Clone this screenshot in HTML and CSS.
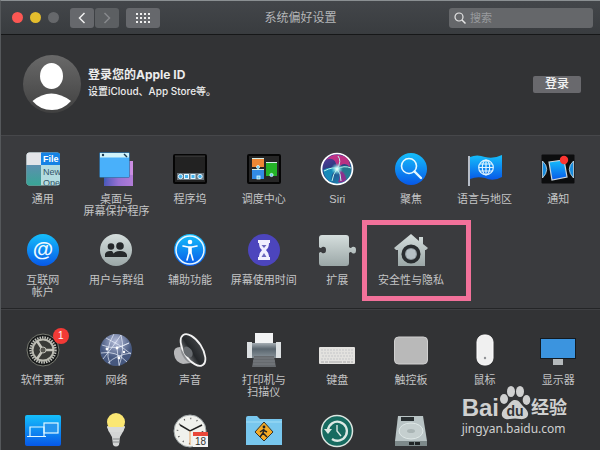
FILE: index.html
```html
<!DOCTYPE html>
<html lang="zh-CN">
<head>
  <meta charset="UTF-8">
  <meta name="viewport" content="width=device-width, initial-scale=1.0">
  <title>系统偏好设置</title>
  <link rel="stylesheet" href="styles.css">
</head>
<body>
  <div class="window">
    <header class="toolbar">
      <div class="tools">
        <div class="lights">
          <button class="light red" aria-label="关闭"></button>
          <button class="light yellow" aria-label="最小化"></button>
          <button class="light gray" aria-label="缩放" disabled></button>
        </div>
        <div class="nav">
          <button class="tool" aria-label="后退">
            <svg width="10" height="12" viewBox="0 0 10 12"><path d="M7.500 1L2.500 6L7.500 11" fill="none" stroke="#f0f0f0" stroke-width="1.500"/></svg>
          </button>
          <button class="tool" aria-label="前进" disabled>
            <svg width="10" height="12" viewBox="0 0 10 12"><path d="M2.500 1L7.500 6L2.500 11" fill="none" stroke="#87898c" stroke-width="1.500"/></svg>
          </button>
        </div>
        <button class="tool wide" aria-label="显示全部">
          <svg width="14" height="10" viewBox="0 0 14 10"><path d="M0 1H14M0 5H14M0 9H14" stroke="#eee" stroke-width="2" stroke-dasharray="2 2"/></svg>
        </button>
      </div>
      <h1>系统偏好设置</h1>
      <label class="search">
        <svg width="12" height="12" viewBox="0 0 12 12"><circle cx="5" cy="5" r="4" fill="none" stroke="#e6e6e6" stroke-width="1.200"/><path d="M8 8L11.500 11.500" stroke="#e6e6e6" stroke-width="1.500"/></svg>
        <input type="search" placeholder="搜索" aria-label="搜索">
      </label>
    </header>

    <section class="account">
      <svg class="avatar" width="58" height="58" viewBox="0 0 58 58">
        <defs>
          <linearGradient id="avatar-bg" x2="0" y2="1"><stop stop-color="#696969"/><stop offset="1" stop-color="#404040"/></linearGradient>
        </defs>
        <circle cx="29" cy="29" r="29" fill="url(#avatar-bg)"/>
        <ellipse cx="28.500" cy="21" rx="11.500" ry="13" fill="#fff"/>
        <path d="M9.500 46Q28 31 48 46Q40 55 29 55Q17 55 9.500 46Z" fill="#fff"/>
      </svg>
      <div class="account-text">
        <h2>登录您的Apple ID</h2>
        <p>设置iCloud、App Store等。</p>
      </div>
      <button class="sign-in">登录</button>
    </section>

    <main>
      <section class="panel light-panel">
        <a class="item" href="#">
          <svg class="icon" viewBox="-20 -18 40 36">
            <defs>
              <linearGradient id="teal" x2="0" y2="1"><stop stop-color="#5d8fae"/><stop offset="1" stop-color="#37a695"/></linearGradient>
              <clipPath id="general-clip"><rect x="-16.500" y="-16.500" width="33.500" height="33" rx="3"/></clipPath>
            </defs>
            <g clip-path="url(#general-clip)">
              <rect x="-17" y="-17" width="35" height="35" fill="#b3dce0"/>
              <rect x="-17" y="-17" width="16" height="13" fill="#e3e4e8"/>
              <rect x="-17" y="-4" width="15" height="21" fill="url(#teal)"/>
              <rect x="-2" y="-17" width="20" height="13" fill="#1583e5"/>
              <text class="icon-bold" x="0" y="-7" font-size="9" fill="#fff">File</text>
              <text class="icon-text" x="0" y="6" font-size="9" fill="#35566a">New</text>
              <text class="icon-text" x="0" y="17" font-size="9" fill="#35566a">Open</text>
            </g>
          </svg>
          <span>通用</span>
        </a>
        <a class="item" href="#">
          <svg class="icon" viewBox="-20 -18 40 36">
            <defs><linearGradient id="purple"><stop stop-color="#3d5bb8"/><stop offset=".5" stop-color="#a87fdc"/><stop offset="1" stop-color="#ce8ee2"/></linearGradient></defs>
            <rect x="-12" y="-8" width="29" height="25" fill="url(#purple)"/>
            <path d="M-12 14Q0 4 17 6V17H-12Z" fill="#7052bd" opacity=".3"/>
            <rect x="-16.500" y="-16.500" width="30" height="25" rx="1" fill="#49b0fa" stroke="#255882" stroke-width=".5"/>
            <path d="M-16 -16H13V-11.500H-16Z" fill="#cff2fa"/>
            <circle cx="-13" cy="-14" r="1.200" fill="#183950"/><path d="M8 -15L11 -12" stroke="#183950" stroke-width="1.400"/>
          </svg>
          <span>桌面与<br>屏幕保护程序</span>
        </a>
        <a class="item" href="#">
          <svg class="icon" viewBox="-20 -18 40 36">
            <rect x="-16" y="-14" width="32" height="28" rx="1" fill="#222" stroke="#050505" stroke-width="2"/>
            <path d="M-15 -13H15" stroke="#555" stroke-width=".7"/>
            <rect x="-13" y="4" width="27" height="7" fill="#68747c"/>
            <g fill="#43b3ef" stroke="#e4f6ff"><circle cx="-9.500" cy="7.500" r="2.200"/><rect x="-5.500" y="5.500" width="4" height="4"/><rect x="1" y="5.500" width="4" height="4"/><circle cx="10" cy="7.500" r="2.200"/></g>
          </svg>
          <span>程序坞</span>
        </a>
        <a class="item" href="#">
          <svg class="icon" viewBox="-20 -18 40 36">
            <rect x="-16" y="-14" width="32" height="28" rx="1" fill="#262626" stroke="#050505" stroke-width="2"/>
            <path d="M-12 -11H0V-2H-12Z" fill="#ed8735"/><path d="M-12 0H0V10H-12Z" fill="#328be3"/><path d="M2 -7H13V7H2Z" fill="#24b328"/>
            <path d="M-12 -10.500H0M-12 .5H0M2 -6.500H13" stroke="#d5eee8"/>
            <g fill="#64c9f1" stroke="#e2f8ff" stroke-width=".8"><circle cx="-6" cy="-2" r="1.500"/><rect x="-7" y="7" width="3" height="3"/><circle cx="7.500" cy="6" r="1.600"/></g>
          </svg>
          <span>调度中心</span>
        </a>
        <a class="item" href="#">
          <svg class="icon" viewBox="-20 -18 40 36">
            <defs>
              <linearGradient id="siri-base" x2=".5" y2="1"><stop stop-color="#6b3aa8"/><stop offset=".5" stop-color="#2a3b7e"/><stop offset="1" stop-color="#1b81ae"/></linearGradient>
              <radialGradient id="glow"><stop stop-color="#fff"/><stop offset=".3" stop-color="#bff8f5" stop-opacity=".9"/><stop offset="1" stop-color="#58dce4" stop-opacity="0"/></radialGradient>
            </defs>
            <circle r="15.500" fill="url(#siri-base)" stroke="#fff" stroke-width="1.700"/>
            <path d="M0 0Q-1 -14 -11 -9Q-5 -15 2 -14Q13 -13 13 -2Q7 -9 0 0" fill="#dd2f83" opacity=".8"/>
            <path d="M0 0Q-8 -3 -14 1Q-12 11 -5 13Q-8 6 0 0Z" fill="#1689b8"/>
            <path d="M0 0Q10 1 10 10Q5 15 1 13Q5 6 0 0Z" fill="#8c318d"/>
            <path d="M0 0Q8 -6 14 -1Q14 7 9 11Q9 3 0 0Z" fill="#26808d" opacity=".8"/>
            <path d="M-13 2Q-3 -3 0 0Q-4 5 -5 12M0 0Q5 -8 1 -13M0 0Q7 -4 14 -1M0 0Q4 4 4 12" stroke="#baf4eb" stroke-width="1" fill="none"/>
            <circle r="6" fill="url(#glow)"/>
          </svg>
          <span>Siri</span>
        </a>
        <a class="item" href="#">
          <svg class="icon" viewBox="-20 -18 40 36">
            <defs><linearGradient id="blue" x2="0" y2="1"><stop stop-color="#15bffb"/><stop offset="1" stop-color="#0758e8"/></linearGradient></defs>
            <circle r="16" fill="url(#blue)"/><circle cx="-2" cy="-3" r="7.500" fill="none" stroke="#e6f8ff" stroke-width="1.600"/><path d="M3.500 2.500L10 9" stroke="#e6f8ff" stroke-width="2.400" stroke-linecap="round"/>
          </svg>
          <span>聚焦</span>
        </a>
        <a class="item" href="#">
          <svg class="icon" viewBox="-20 -18 40 36">
            <path d="M-15 -12Q-8 -15 0 -12Q9 -10 17 -14V8Q8 13 0 9Q-8 7 -15 10Z" fill="url(#blue)"/>
            <path d="M-16 -13V17" stroke="#b7bdc7" stroke-width="2"/>
            <g fill="none" stroke="#dff3ff" stroke-width="1.200"><circle cx="1" cy="-1.500" r="7.300"/><ellipse cx="1" cy="-1.500" rx="3.700" ry="7.300"/><path d="M1 -9V6M-6 -1.500H8M-5 -5H7M-5 2H7"/></g>
          </svg>
          <span>语言与地区</span>
        </a>
        <a class="item" href="#">
          <svg class="icon" viewBox="-20 -18 40 36">
            <rect x="-16.500" y="-14.500" width="33" height="29" rx="1" fill="#0c0d0e"/>
            <path d="M-15.500 -8Q-7 0 -15.500 9ZM15.500 -8Q7 0 15.500 9Z" fill="#168bde" stroke="#c7d9e2" stroke-width=".8"/>
            <path d="M-9 -7L6 -9L9 8L-6 11Z" fill="url(#blue)" stroke="#ccd6dd" stroke-width="1.200"/>
            <circle cx="6" cy="-9" r="4.200" fill="#fb3531"/>
          </svg>
          <span>通知</span>
        </a>

        <a class="item" href="#">
          <svg class="icon" viewBox="-20 -18 40 36"><circle r="16" fill="url(#blue)"/><text class="icon-bold" y="6" font-size="21" text-anchor="middle" fill="#eef9ff">@</text></svg>
          <span>互联网<br>帐户</span>
        </a>
        <a class="item" href="#">
          <svg class="icon" viewBox="-20 -18 40 36">
            <defs><linearGradient id="silver" x2="0" y2="1"><stop stop-color="#d5dedd"/><stop offset="1" stop-color="#9ba7a7"/></linearGradient></defs>
            <circle r="16" fill="url(#silver)"/>
            <g fill="#25282a"><circle cx="-5" cy="-3.500" r="3.300"/><path d="M-11 7V4Q-10 1 -6 1H-4L0 7Z"/><circle cx="4" cy="-4" r="3.800"/><path d="M-3 7V5Q-2 1 4 1Q10 1 11 5V7Z"/></g>
          </svg>
          <span>用户与群组</span>
        </a>
        <a class="item" href="#">
          <svg class="icon" viewBox="-20 -18 40 36">
            <circle r="16" fill="url(#blue)"/><circle r="14" fill="none" stroke="#e5f7ff" stroke-width="1.500"/>
            <circle cy="-8" r="2.300" fill="#fff"/><path d="M-7 -4L-2 -3H2L7 -4M0 -3V3M-1 -3V3L-3 10M1 -3V3L3 10" fill="none" stroke="#fff" stroke-width="1.600" stroke-linecap="round"/>
          </svg>
          <span>辅助功能</span>
        </a>
        <a class="item" href="#">
          <svg class="icon" viewBox="-20 -18 40 36">
            <circle r="16" fill="#4c45bd"/><path d="M-6 -10H6V-7H5Q5 -2 2 0Q5 3 5 7H6V10H-6V7H-5Q-5 3 -2 0Q-5 -2 -5 -7H-6Z" fill="#f0efff"/><path d="M-2.500 -5H2.500L0 -2ZM0 3L2.500 7H-2.500Z" fill="#6a66bd"/>
          </svg>
          <span>屏幕使用时间</span>
        </a>
        <a class="item" href="#">
          <svg class="icon" viewBox="-20 -18 40 36"><path d="M-15 -15H9Q12 -15 12 -12V-3Q14 -1 15 -3Q19 -4 19 0Q19 5 15 3Q14 1 12 3V13Q12 16 9 16H-15Q-18 16 -18 13V3Q-16 1 -15 3Q-11 4 -11 0Q-11 -4 -15 -3Q-16 -1 -18 -3V-12Q-18 -15 -15 -15Z" fill="url(#silver)"/></svg>
          <span>扩展</span>
        </a>
        <a class="item current" href="#">
          <svg class="icon" viewBox="-20 -18 40 36">
            <path d="M-17 -2L0 -16L8 -9V-13H12V-6L17 -2L15 0H14V16H-13V0H-15Z" fill="url(#silver)"/>
            <circle cy="4" r="7.800" fill="#8d979c" stroke="#292d30" stroke-width="3.500"/><path d="M0 -1L4 0L5 4L4 8L0 9L-4 8L-5 4L-4 0Z" fill="#b6c0c5"/>
          </svg>
          <span>安全性与隐私</span>
        </a>
      </section>

      <section class="panel dark-panel">
        <a class="item" href="#">
          <span class="icon-box">
            <svg class="icon" viewBox="-20 -18 40 36">
              <circle r="16" fill="#161819" stroke="#777970"/><circle r="12.500" fill="none" stroke="#bfc0b9" stroke-width="2.500" stroke-dasharray="1.500 1"/>
              <circle r="10.500" fill="#393a37" stroke="#babab1" stroke-width="2"/><path d="M0 0L-6 -9M0 0H11M0 0L-6 9" stroke="#c5c5bc" stroke-width="2.500"/><circle r="3" fill="#565650" stroke="#bcbcb4"/>
            </svg>
            <b class="badge">1</b>
          </span>
          <span>软件更新</span>
        </a>
        <a class="item" href="#">
          <svg class="icon" viewBox="-20 -18 40 36">
            <defs><radialGradient id="globe" cy=".25"><stop stop-color="#b5bdda"/><stop offset="1" stop-color="#46587f"/></radialGradient></defs>
            <circle r="16" fill="url(#globe)"/>
            <path d="M-14 -5Q0 1 13 -7M-10 -12Q5 -5 15 4M-2 -16Q-12 0 -6 14M5 -15Q9 0 3 16M-15 3Q0 0 11 12M-13 9Q-4 -2 5 -15M-8 13Q0 5 15 3M1 -2L3 15M1 -2L13 -7" fill="none" stroke="#eff4ff" stroke-width=".8" opacity=".85"/>
            <g fill="#fff"><circle cx="-9" cy="-1" r="1.400"/><circle cx="1" cy="-2" r="1.400"/><circle cx="8" cy="2" r="1.200"/><circle cx="3" cy="8" r="1.400"/></g>
          </svg>
          <span>网络</span>
        </a>
        <a class="item" href="#">
          <svg class="icon" viewBox="-20 -18 40 36">
            <defs><linearGradient id="cone"><stop stop-color="#6c6f72"/><stop offset=".4" stop-color="#24272a"/><stop offset="1" stop-color="#3e4144"/></linearGradient></defs>
            <path d="M-8 -3Q-17 -4 -16 4Q-15 12 -7 14L1 13Z" fill="#b6b7b9"/>
            <path d="M-9 -10Q-12 4 -2 12L12 17Z" fill="#8c8e91"/>
            <ellipse cx="3" cy="0" rx="9" ry="18" fill="url(#cone)" stroke="#f1f1f1" stroke-width="1.800" transform="rotate(-33 3 0)"/>
            <ellipse cx="-2" cy="2" rx="4" ry="6" fill="#686c70" transform="rotate(-33 -2 2)"/>
          </svg>
          <span>声音</span>
        </a>
        <a class="item" href="#">
          <svg class="icon" viewBox="-20 -18 40 36">
            <defs><linearGradient id="printer" x2="0" y2="1"><stop stop-color="#a6aeb4"/><stop offset=".4" stop-color="#59656e"/><stop offset="1" stop-color="#89939a"/></linearGradient></defs>
            <path d="M-9 -17H9V-6H-9Z" fill="#f2f3f4"/><path d="M-14 -7H14V8H-14Z" fill="url(#printer)"/>
            <path d="M-17 -8H-12V8H-17ZM12 -8H17V8H12Z" fill="#dce0e2"/><path d="M-10 6H10L12 17H-12Z" fill="#666a6e"/><path d="M-10 8H10M-11 11H11M-11 14H11" stroke="#797d81"/>
          </svg>
          <span>打印机与<br>扫描仪</span>
        </a>
        <a class="item" href="#">
          <svg class="icon" viewBox="-20 -18 40 36"><rect x="-18" y="-3" width="36" height="17" rx="1" fill="#e3e2df"/><path d="M-16 0H16M-16 3H16M-15 6H16M-16 9H16" stroke="#aaa" stroke-width="1.500" stroke-dasharray="2 1"/><path d="M-16 0H16M-16 3H16M-15 6H16M-16 9H16" stroke="#fff" stroke-width=".8" stroke-dasharray="2 1"/><path d="M-16 12H16" stroke="#aaa" stroke-dasharray="3 1 3 1 13 1 3 1"/></svg>
          <span>键盘</span>
        </a>
        <a class="item" href="#">
          <svg class="icon" viewBox="-20 -18 40 36"><rect x="-16.500" y="-13" width="33" height="27" rx="4" fill="#b9b9b9" stroke="#d0d0d0"/></svg>
          <span>触控板</span>
        </a>
        <a class="item" href="#">
          <svg class="icon" viewBox="-20 -18 40 36"><rect x="-8" y="-15" width="16" height="30" rx="7" fill="#f0f0f0" stroke="#fff"/><circle cy="8" r="1.200" fill="#909296"/></svg>
          <span>鼠标</span>
        </a>
        <a class="item" href="#">
          <svg class="icon" viewBox="-20 -18 40 36"><path d="M-5 9H5V15H-5Z" fill="#b5b9bb"/><rect x="-17.500" y="-11.500" width="35" height="20" fill="#3b94df" stroke="#131a20"/></svg>
          <span>显示器</span>
        </a>

        <a class="item" href="#" aria-label="随航">
          <svg class="icon" viewBox="-20 -18 40 36">
            <rect x="-18" y="-16" width="36" height="31" rx="2" fill="url(#blue)"/>
            <rect x="1" y="-8" width="14" height="10" fill="#2695ed" stroke="#dff8ff" stroke-width="1.200"/><path d="M-13 5V-4H1V5M-16 5.500H3" fill="none" stroke="#dff8ff" stroke-width="1.200"/>
          </svg>
        </a>
        <a class="item" href="#" aria-label="节能">
          <svg class="icon" viewBox="-20 -18 40 36"><path d="M-9 -5Q-7 2 -4 6L-3 14Q0 17 3 14L4 6Q7 2 9 -5Z" fill="#d3d5d5"/><circle cy="-9" r="9" fill="#fbe773"/><path d="M-9 -4H9L7 1H-7Z" fill="#d8dad9"/><path d="M-3 8H4M-3 11H4" stroke="#85898a"/></svg>
        </a>
        <a class="item" href="#" aria-label="日期与时间">
          <svg class="icon" viewBox="-20 -18 40 36">
            <circle r="16" fill="#f0f1ed" stroke="#a2a9aa"/><circle r="12.500" fill="none" stroke="#555" stroke-width="1.600" stroke-dasharray="1 5.540"/>
            <path d="M-10 -6L0 0L12 -6" fill="none" stroke="#222" stroke-width="1.500"/><path d="M0 0V14" stroke="#e6a365"/>
            <rect x="3" y="1" width="15" height="15" fill="#f4f4f4"/><path d="M3 1H18V5H3Z" fill="#e94739"/><text class="icon-text" x="10.500" y="14" font-size="10" text-anchor="middle" fill="#333">18</text>
          </svg>
        </a>
        <a class="item" href="#" aria-label="家长控制">
          <svg class="icon" viewBox="-20 -18 40 36">
            <path d="M-18 -13Q-18 -15 -16 -15H-7L-4 -12H18V14H-18Z" fill="#78c7ee"/><path d="M-18 -9H18" stroke="#a2def6"/>
            <path d="M0 -9L9 1L0 10L-9 1Z" fill="#f4aa25" stroke="#30332f"/><circle cx="0" cy="-4" r="1.400" fill="#222"/><path d="M0 -2L-1 2L-4 6M-1 2L3 6M-4 1L-1 -1L3 1" fill="none" stroke="#222" stroke-width="1.500"/>
          </svg>
        </a>
        <a class="item" href="#" aria-label="时间机器">
          <svg class="icon" viewBox="-20 -18 40 36">
            <circle r="15.500" fill="#176b60" stroke="#dce6e1" stroke-width="1.500"/><path d="M-9 -1A9.500 9.500 0 1 1 -5 8" fill="none" stroke="#dce9e4" stroke-width="2.300"/><path d="M-13 -2H-5L-9 3Z" fill="#dce9e4"/><path d="M0 -6V0L4 5" fill="none" stroke="#dce9e4" stroke-width="1.400"/>
          </svg>
        </a>
        <a class="item" href="#" aria-label="启动磁盘">
          <svg class="icon" viewBox="-20 -18 40 36">
            <path d="M-13 -15H12L16 10H-16Z" fill="#b9c4c5"/><path d="M-16 10H16V15H-16Z" fill="#7d898a"/><path d="M-10 -14H3V-10H-10Z" fill="#292f31"/><path d="M-2 12.500H10" stroke="#202526" stroke-width="3" stroke-dasharray="5 1"/>
            <ellipse cy="0" rx="12" ry="8" fill="#c5cfcf" stroke="#dfe8e7"/><ellipse cy="0" rx="4" ry="2" fill="#aab5b5"/>
          </svg>
        </a>
      </section>
    </main>

    <div class="watermark">
      <div class="brand">
        <span>Bai</span>
        <svg width="32" height="34" viewBox="0 0 32 34">
          <g fill="#cfd0d0"><ellipse cx="5" cy="13" rx="4" ry="5"/><ellipse cx="12" cy="5.500" rx="4" ry="5.500"/><ellipse cx="21" cy="5.500" rx="4" ry="5.500"/><ellipse cx="27.500" cy="14" rx="3.800" ry="5"/><path d="M16 14C21 14 22 19 26 22C33 29 27 34 21 33Q16 32 11 33C4 34 0 29 5 23C10 20 11 14 16 14Z"/></g>
          <text class="icon-bold" x="16" y="30" font-size="14" text-anchor="middle" fill="#323335">du</text>
        </svg>
        <span class="brand-cn">经验</span>
      </div>
      <div class="site">jingyan.baidu.com</div>
    </div>
  </div>
</body>
</html>
```
FILE: styles.css
```css
* {
  box-sizing: border-box;
}

body {
  margin: 0;
  background-color: #323335;
  color: #c4c5c6;
  font-family: "Liberation Sans", "Noto Sans CJK SC", sans-serif;
}

h1, h2, p {
  margin: 0;
}

button {
  padding: 0;
  border: none;
  font-family: inherit;
}

.window {
  position: relative;
  display: flex;
  flex-direction: column;
  height: 100vh;
  overflow: hidden;
  border-top: 1px solid #8a8f92;
  border-left: 1px solid #55585b;
}

.toolbar {
  display: grid;
  grid-template-columns: 1fr auto 1fr;
  align-items: center;
  flex-shrink: 0;
  height: 34px;
  padding: 0 7px 0 11px;
  background: linear-gradient(#43464a, #393c3f);
  border-bottom: 1px solid #161718;
}

.tools, .lights, .nav {
  display: flex;
  align-items: center;
}

.tools {
  gap: 7px;
}

.lights {
  gap: 7px;
  margin-right: 4px;
}

.nav {
  gap: 1px;
}

.light {
  width: 11px;
  height: 11px;
  border-radius: 50%;
}

.red {
  background-color: #fc5753;
}

.yellow {
  background-color: #e4bd2d;
}

.gray {
  background-color: #66686b;
}

.tool {
  display: flex;
  align-items: center;
  justify-content: center;
  width: 24px;
  height: 20px;
  border-radius: 3px;
  background-color: #66686c;
}

.tool:disabled {
  background-color: #5c5f62;
}

.wide {
  width: 34px;
}

h1 {
  padding-right: 4px;
  font-size: 12px;
  font-weight: normal;
  line-height: 20px;
  color: #b4b6b8;
}

.search {
  display: flex;
  align-items: center;
  justify-self: end;
  gap: 4px;
  width: 144px;
  height: 20px;
  padding: 0 5px;
  border-radius: 3px;
  background-color: #65676a;
}

.search input {
  flex: 1;
  min-width: 0;
  padding: 0;
  border: none;
  outline: none;
  background: none;
  color: #e6e6e6;
  font-family: inherit;
  font-size: 11px;
}

.search input::placeholder {
  color: #999b9e;
}

.account {
  display: flex;
  align-items: center;
  flex-shrink: 0;
  gap: 7px;
  height: 100px;
  padding: 0 19px 2px 22px;
  background-color: #323335;
}

.account-text {
  flex: 1;
  padding-bottom: 4px;
  font-family: Inter, "Noto Sans CJK SC", sans-serif;
  color: #ececec;
}

h2 {
  font-size: 12px;
  font-weight: bold;
  line-height: 17px;
}

.account-text p {
  font-size: 10px;
  font-weight: 500;
  line-height: 16px;
}

.sign-in {
  width: 48px;
  height: 17px;
  border-radius: 2px;
  background-color: #69696d;
  color: #f4f4f4;
  font-size: 12px;
  font-weight: 500;
  line-height: 17px;
}

.panel {
  display: grid;
  grid-template-columns: repeat(8, 1fr);
  padding: 0 5px;
  row-gap: 15px;
}

.light-panel {
  padding-top: 15px;
  padding-bottom: 10px;
  background-color: #3a3b3e;
  border-top: 1px solid #46474a;
  border-bottom: 1px solid #242527;
}

.dark-panel {
  padding-top: 22px;
  background-color: #323335;
  border-top: 1px solid #3f4043;
}

.item {
  position: relative;
  display: flex;
  flex-direction: column;
  align-items: center;
  gap: 6px;
  color: #c4c5c6;
  font-size: 11px;
  line-height: 12px;
  text-align: center;
  text-decoration: none;
  white-space: nowrap;
}

.icon {
  display: block;
  width: 40px;
  height: 36px;
}

.icon-box {
  position: relative;
}

.icon-text, .icon-bold {
  font-family: "Liberation Sans", sans-serif;
}

.icon-bold {
  font-weight: bold;
}

.badge {
  position: absolute;
  top: -4px;
  right: -6px;
  width: 16px;
  height: 16px;
  border-radius: 50%;
  background-color: #f33a36;
  color: #fff;
  font-size: 10px;
  font-weight: normal;
  line-height: 16px;
}

/* frame around the security pane */
.current::after {
  content: "";
  position: absolute;
  top: -12px;
  right: -23px;
  bottom: -3px;
  left: -12px;
  border: 5px solid #f2719a;
}

.watermark {
  position: absolute;
  right: 33px;
  bottom: 13px;
  color: #cfd0d0;
}

.brand {
  display: flex;
  align-items: flex-end;
  font-size: 24px;
  font-weight: bold;
  line-height: 24px;
}

.brand-cn {
  font-size: 18px;
}

.site {
  font-family: "Noto Sans", sans-serif;
  font-size: 12px;
  line-height: 17px;
}
```
